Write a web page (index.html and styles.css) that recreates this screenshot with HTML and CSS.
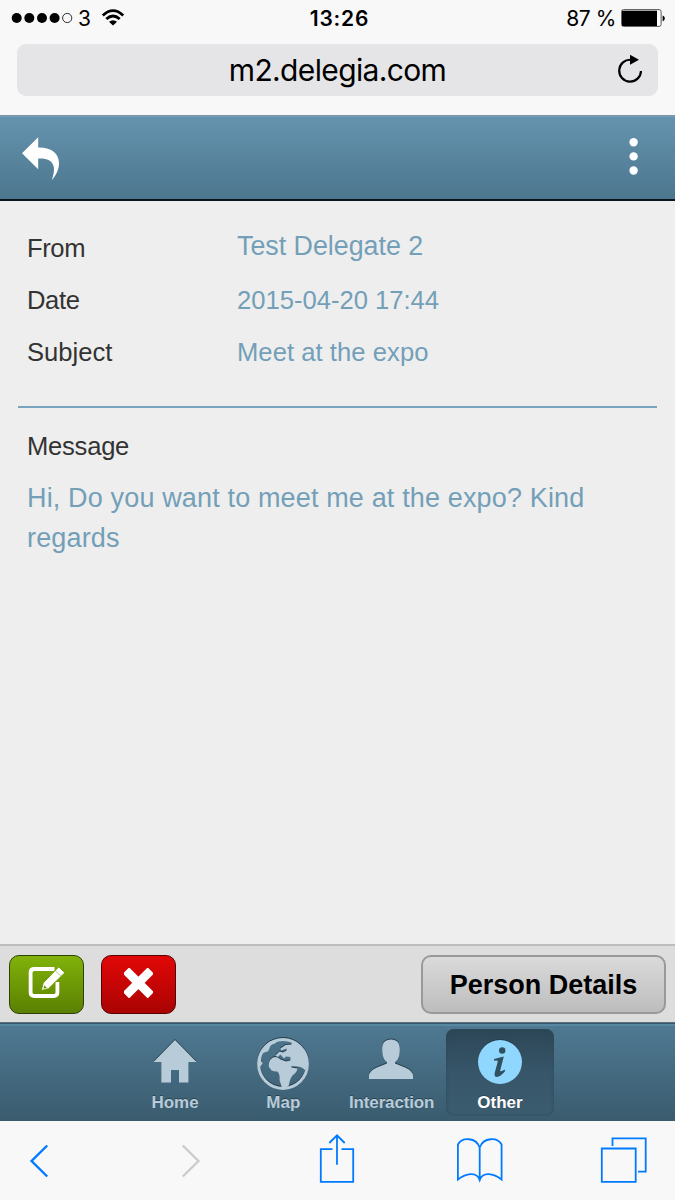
FILE: index.html
```html
<!DOCTYPE html>
<html lang="en">
<head>
    <meta charset="UTF-8">
    <meta name="viewport" content="width=device-width, initial-scale=1.0">
    <title>Message</title>

    <link rel="stylesheet" href="styles.css">
</head>
<body>
    <div class="browser-top">
        <div class="status">
            <div class="status-left">
                <svg class="signal" viewBox="11 12 62 12" width="62" height="12">
                    <circle cx="16.7" cy="18" r="5"/>
                    <circle cx="29.3" cy="18" r="5"/>
                    <circle cx="42" cy="18" r="5"/>
                    <circle cx="54.6" cy="18" r="5"/>
                    <circle cx="67.2" cy="18" r="4.6" fill="none" stroke="#000" stroke-width="0.8"/>
                </svg>
                <span class="carrier">3</span>
                <svg class="wifi" viewBox="100 8 24 18" width="24" height="18" fill="none" stroke="#000" stroke-width="2.8">
                    <path d="M101.8 15.4Q112 5.8 122.2 15.4"/>
                    <path d="M105.3 19Q112 12.9 118.7 19"/>
                    <path d="M108 21.7Q112 18.6 116 21.7L112 25.5Z" fill="#000" stroke="none"/>
                </svg>
            </div>
            <div class="time">13:26</div>
            <div class="status-right">
                <span>87 %</span>
                <svg class="battery" viewBox="621 9 44 18" width="44" height="18">
                    <rect x="621.6" y="9.6" width="39.5" height="16.8" rx="2" fill="#fff" stroke="#555" stroke-width="1"/>
                    <rect x="622" y="10.7" width="35" height="15.3"/>
                    <path d="M662.6 15.5Q664.8 16 664.8 18.3T662.6 21.5Z"/>
                </svg>
            </div>
        </div>
        <div class="address">
            <span class="url">m2.delegia.com</span>
            <svg class="reload" viewBox="616 54 28 32" width="28" height="32">
                <path d="M631 60.8A10.9 10.9 0 1 0 641 71.9" fill="none" stroke="#000" stroke-width="2.2"/>
                <path d="M630 55.7L639 60.7L630 65.8Z"/>
            </svg>
        </div>
    </div>

    <div class="toolbar">
        <svg viewBox="22 137 38 44" width="38" height="44">
            <path fill="#fff" d="M22 153.3L38.2 137.3V147.6C52 147.3 59 154 59 163.5C59 170 55.5 176 51.8 180C54 173.5 54.5 169.5 53.5 166C51.7 160 47 158.3 38.2 158.6V169.3Z"/>
        </svg>
        <svg viewBox="628 137 12 38" width="12" height="38" fill="#fff">
            <circle cx="633.6" cy="142.3" r="4.2"/>
            <circle cx="633.6" cy="156.4" r="4.2"/>
            <circle cx="633.6" cy="170.5" r="4.2"/>
        </svg>
    </div>

    <div class="content">
        <div class="row">
            <span class="label">From</span>
            <span class="value sender">Test Delegate 2</span>
        </div>
        <div class="row">
            <span class="label">Date</span>
            <span class="value">2015-04-20 17:44</span>
        </div>
        <div class="row">
            <span class="label label-subject">Subject</span>
            <span class="value subject">Meet at the expo</span>
        </div>
        <div class="message">
            <div class="message-title">Message</div>
            <div class="message-text">Hi, Do you want to meet me at the expo? Kind<br>regards</div>
        </div>
    </div>

    <div class="actions">
        <button class="btn btn-edit">
            <svg viewBox="28 966 38 34" width="38" height="34">
                <path d="M54.500 969H34.500Q30.600 969 30.600 972.500V992.500Q30.600 996 34.500 996H53.500Q57.400 996 57.400 992.500V982" fill="none" stroke="#fff" stroke-width="3.8"/>
                <path d="M58.800 966.800L64.800 972.800L48.500 988.700L41.300 990.500L43.200 983Z" fill="#fff" stroke="#6f9f08" stroke-width="1"/>
                <path d="M44.300 985.200L47 987.900L43.500 988.600Z" fill="#6b9407"/>
                <path d="M55.300 970.600L61.300 976.600" stroke="#8fb53f" stroke-width="0.7"/>
            </svg>
        </button>
        <button class="btn btn-delete">
            <svg viewBox="124 968 29 30" width="29" height="30">
                <path d="M126 970.5L150.8 995.3M150.8 970.5L126 995.3" stroke="#fff" stroke-width="8.8"/>
            </svg>
        </button>
        <button class="btn btn-person">Person Details</button>
    </div>

    <div class="tabs">
        <div class="tab">
            <svg viewBox="148 1034 54 56" width="54" height="56" fill="#b8cbd9">
                <path d="M175 1040L196.5 1062H188.5V1082.500H179V1070H171V1082.500H161.300V1062H153.500Z"/>
            </svg>
            <span>Home</span>
        </div>
        <div class="tab">
            <svg viewBox="256 1034 54 56" width="54" height="56" fill="#b8cbd9">
                <circle cx="283" cy="1064" r="24.4" fill="none" stroke="#b8cbd9" stroke-width="3"/>
                <path d="M259 1056Q262 1046 270 1041.500L279 1040L275 1043.500Q270 1044.500 269.500 1048Q269 1052 264 1052.500Q261 1054 261 1061L262.700 1063L260.500 1066.500L258 1065Z"/>
                <path d="M291.700 1041.500Q308 1048 308 1067L304.500 1070Q303 1067 298 1066.500L291.500 1066V1067.500L297.500 1068.500Q297 1072 293 1075Q290 1078 289 1085L286.500 1088H282L279.500 1080Q280 1074 277.500 1071.500Q270.500 1072 268.700 1066Q268.500 1060 272.500 1057.700Q277 1055.500 280.500 1059.500L286 1061.500L290.300 1060.500V1057L286 1056.500L284 1058.500L280.500 1054.500L277.500 1057L275.500 1055.500L279.500 1051.500L283 1052.500L286.500 1050.500V1048.500L281 1050.500L280.500 1048.500L285.500 1045L291.500 1044.500Z"/>
            </svg>
            <span>Map</span>
        </div>
        <div class="tab">
            <svg viewBox="365 1034 54 56" width="54" height="56" fill="#b8cbd9">
                <path d="M391 1039.500C397 1039.500 399.800 1043 399.800 1049C399.800 1055 398.500 1060 395 1062V1063.500L405 1067.500Q413 1071 413 1076V1079H369V1076Q369 1071 377 1067.500L387 1063.500V1062C383.500 1060 382.200 1055 382.200 1049C382.200 1043 385 1039.500 391 1039.500Z"/>
            </svg>
            <span class="interaction">Interaction</span>
        </div>
        <div class="tab active">
            <svg viewBox="473 1034 54 56" width="54" height="56">
                <circle cx="500" cy="1062" r="22" fill="#8fd7ff"/>
                <circle cx="502.2" cy="1050.5" r="3.2" fill="#31505f"/>
                <path d="M494 1059Q499 1057.5 503.8 1056.5L500.2 1070.5Q499.8 1072.6 504.5 1069.5L505.2 1071Q501 1076.5 496.8 1077Q494 1077 494.7 1073L497.8 1061.5Q498 1060 494 1060.8Z" fill="#31505f"/>
            </svg>
            <span>Other</span>
        </div>
    </div>

    <div class="browser-bottom">
        <svg viewBox="28 1130 24 56" width="24" height="56" fill="none" stroke="#007aff" stroke-width="2.4">
            <path d="M47.2 1145.5L31.6 1161L47.2 1176.5"/>
        </svg>
        <svg viewBox="180 1130 24 56" width="24" height="56" fill="none" stroke="#ccc" stroke-width="2.4">
            <path d="M182.8 1145.5L198.4 1161L182.8 1176.5"/>
        </svg>
        <svg viewBox="318 1130 40 56" width="40" height="56" fill="none" stroke="#007aff" stroke-width="1.8">
            <path d="M332.5 1149.2H320.8V1181.8H353.2V1149.2H341.5M337 1164.7V1135.5M329.3 1143L337 1135.3L344.7 1143"/>
        </svg>
        <svg viewBox="455 1130 50 56" width="50" height="56" fill="none" stroke="#007aff" stroke-width="1.8">
            <path d="M479.700 1147.500C476 1137 462 1137 457.900 1144.500V1179.500C466 1173 477 1171.500 479.700 1180C482.500 1171.500 493.500 1173 501.600 1179.500V1144.500C497.500 1137 483.500 1137 479.700 1147.500V1181"/>
        </svg>
        <svg viewBox="599 1130 50 56" width="50" height="56" fill="none" stroke="#007aff" stroke-width="1.8">
            <path d="M601.8 1148.500H635.700V1181.800H601.800ZM612.500 1146V1138.300H645.700V1171.700H638"/>
        </svg>
    </div>
</body>
</html>
```
FILE: styles.css
```css
* {
    box-sizing: border-box;
}
body {
    margin: 0;
    font-family: "Liberation Sans", Arial, sans-serif;
    background-color: #eee;
    height: 1200px;
    display: flex;
    flex-direction: column;
    overflow: hidden;
}
svg {
    display: block;
    flex: none;
}

/* browser header */
.browser-top {
    height: 115px;
    background-color: #f8f8f8;
    font-family: Inter, sans-serif;
    color: #000;
}
.status {
    height: 44px;
    padding: 0 10px 0 11px;
    display: grid;
    grid-template-columns: 1fr auto 1fr;
    font-size: 21px;
    line-height: 38px;
}
.status-left, .status-right {
    display: flex;
}
.status-right {
    justify-content: flex-end;
    letter-spacing: -0.4px;
}
.signal {
    margin-top: 12px;
}
.carrier {
    width: 28px;
    padding-left: 5px;
}
.wifi {
    margin-top: 8px;
}
.time {
    padding-left: 3px;
    font-weight: 600;
    letter-spacing: 0.8px;
}
.battery {
    margin: 9px 0 0 5px;
}
.address {
    height: 52px;
    margin: 0 17px;
    padding: 0 14px 0 42px;
    border-radius: 9px;
    background-color: #e5e5e7;
    display: flex;
    align-items: center;
}
.url {
    flex: 1;
    text-align: center;
    font-size: 30px;
    letter-spacing: -0.65px;
}
.reload {
    margin-bottom: 2px;
}

/* app header */
.toolbar {
    height: 86px;
    padding: 21px 35px 0 22px;
    display: flex;
    justify-content: space-between;
    border-top: 1px solid #7b94a1;
    border-bottom: 2px solid #0b141a;
    background: linear-gradient(#6593ae, #4c768e);
    box-shadow: inset 0 1px 0 #73a0b6;
}

/* message details */
.content {
    height: 743px;
    padding: 21px 18px 0;
}
.row {
    height: 52px;
    padding-left: 9px;
    display: flex;
    line-height: 52px;
    font-size: 25.6px;
}
.label {
    width: 210px;
    color: #333;
    letter-spacing: -0.4px;
}
.label-subject {
    letter-spacing: 0;
}
.value, .message-text {
    color: #739fb8;
}
.subject {
    letter-spacing: 0.05px;
}
.sender {
    font-size: 26.8px;
    line-height: 48px;
}
.message {
    margin-top: 28px;
    padding: 18px 9px 0;
    border-top: 2px solid #78a5bd;
}
.message-title {
    font-size: 25.6px;
    line-height: 40px;
    letter-spacing: -0.25px;
    color: #333;
}
.message-text {
    margin-top: 12px;
    font-size: 27px;
    line-height: 40px;
    letter-spacing: 0.15px;
    white-space: nowrap;
}

/* action buttons */
.actions {
    height: 78px;
    padding: 9px 9px 0;
    display: flex;
    border-top: 2px solid #bdbdbd;
    background-color: #ddd;
}
.btn {
    width: 75px;
    height: 59px;
    padding: 0;
    border-radius: 10px;
    border: 1.5px solid #000;
    display: flex;
    align-items: center;
    justify-content: center;
}
.btn-edit {
    border-color: #2c4205;
    background: linear-gradient(#80b20a, #5b8002);
}
.btn-edit svg {
    margin-bottom: 3px;
}
.btn-delete {
    margin-left: 17px;
    border-color: #570303;
    background: linear-gradient(#e20707, #aa0303);
}
.btn-delete svg {
    margin-bottom: 3px;
}
.btn-person {
    width: 245px;
    margin-left: auto;
    padding-top: 2px;
    border: 2px solid #999;
    background: linear-gradient(#dadada, #bdbdbd);
    font-family: "Liberation Sans", Arial, sans-serif;
    font-size: 27px;
    font-weight: bold;
    color: #000;
}

/* tab bar */
.tabs {
    height: 99px;
    padding-top: 6px;
    display: flex;
    justify-content: center;
    border-top: 1px solid #5c7180;
    background: linear-gradient(#4f7a93, #3a5b6e);
    box-shadow: inset 0 1px 0 #365566, inset 0 3px 0 #5788a1;
}
.tab {
    width: 108.3px;
    height: 87px;
    padding-top: 5px;
    display: flex;
    flex-direction: column;
    align-items: center;
    border-radius: 8px;
    color: #b8cbd9;
    font-size: 17px;
    font-weight: bold;
    line-height: 26px;
    text-shadow: 0 -1px 0 #2b4452;
}
.tab svg {
    filter: drop-shadow(0 -1px 0 #253e4c);
}
.interaction {
    letter-spacing: -0.15px;
}
.active {
    color: #fff;
    background: linear-gradient(#2c4656, #37566a 50%, #3b5b6e);
    box-shadow: inset 0 0 3px #2d4858;
}

/* browser footer */
.browser-bottom {
    height: 79px;
    padding: 9px 0 0 28px;
    display: grid;
    grid-template-columns: 152px 138px 137px 144px 50px;
    background-color: #f8f8f8;
}
```
